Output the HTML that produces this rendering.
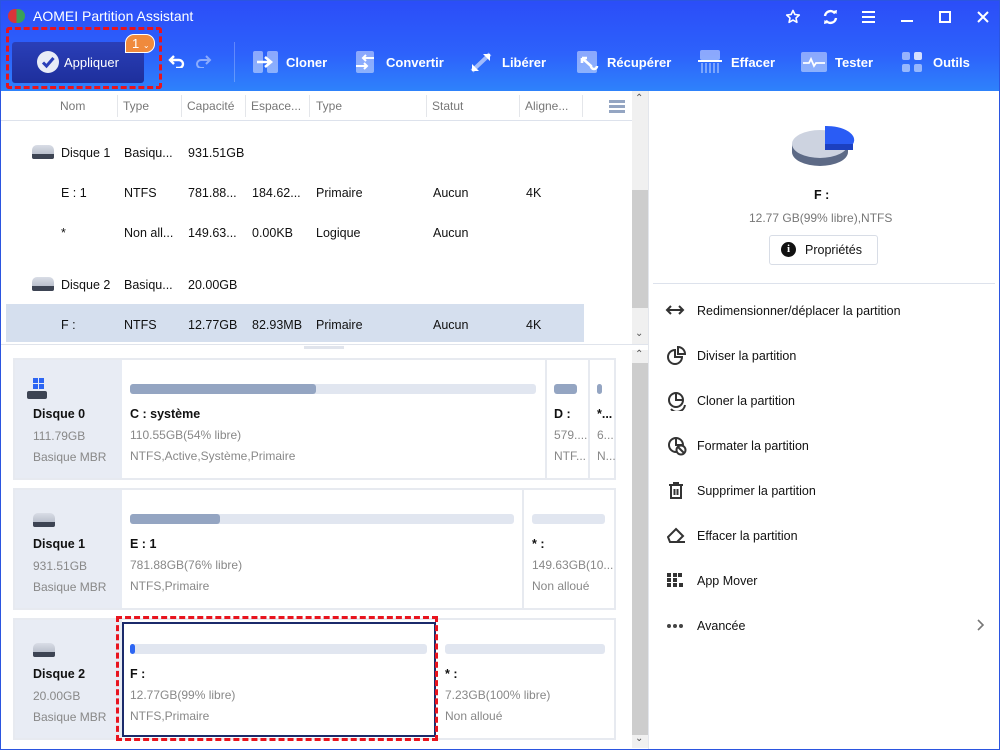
<!DOCTYPE html>
<html><head><meta charset="utf-8"><style>
*{margin:0;padding:0;box-sizing:border-box}
body{width:1000px;height:750px;overflow:hidden;font-family:"Liberation Sans",sans-serif;background:#fff;position:relative;font-size:13px;color:#111}
.a{position:absolute}
#hdr{left:0;top:0;width:1000px;height:91px;background:linear-gradient(#2b4df8,#2d62fb 60%,#2e82fb)}
.wt{color:#fff}
.tb{color:#fff;font-size:13px;font-weight:bold;top:55px}
.hd{top:99px;font-size:12px;color:#777}
.sep{top:95px;width:1px;height:22px;background:#e4e6ea}
.r{font-size:12.5px;color:#111}
.card{background:#fff;border:2px solid #e7eaf0}
.lab{background:#e8ecf4}
.bar{height:10px;border-radius:3px;background:#e1e6f0}
.fill{height:10px;border-radius:3px;background:#94a5c2}
.b{font-weight:bold;font-size:12.5px}
.g{color:#888;font-size:12px}
.mi{left:697px;font-size:12.5px;color:#111}
.disk{width:22px;height:14px;border-radius:5px 5px 2px 2px;background:linear-gradient(#d9dde6,#a9b0be)}
.disk:after{content:"";position:absolute;left:0;bottom:0;width:22px;height:5px;background:#3d4453;border-radius:0 0 2px 2px}
svg.i{position:absolute;fill:none;stroke:#333;stroke-width:2}
</style></head><body>
<div class="a" id="hdr"></div>
<div class="a" style="left:0;top:0;width:1000px;height:750px;border:1px solid #2b55e0;pointer-events:none;z-index:5"></div>
<div class="a" style="left:8px;top:9px;width:17px;height:14px;border-radius:7px;background:linear-gradient(90deg,#d8343a 50%,#3aa059 50%)"></div>
<div class="a wt" style="left:33px;top:8px;font-size:14px">AOMEI Partition Assistant</div>
<svg class="a" style="left:785px;top:9px" width="16" height="16" viewBox="0 0 16 16"><path d="M8 1.5l1.9 4 4.4.5-3.3 3 .9 4.3L8 11.1l-3.9 2.2.9-4.3-3.3-3 4.4-.5z" fill="none" stroke="#fff" stroke-width="1.6" stroke-linejoin="round"/></svg>
<svg class="a" style="left:822px;top:9px" width="17" height="16" viewBox="0 0 17 16"><path d="M3 7a5.5 5.5 0 0 1 10-2.5M14 9a5.5 5.5 0 0 1-10 2.5" fill="none" stroke="#fff" stroke-width="2.4"/><path d="M11 2l3.5 3L15 1zM6 14l-3.5-3L2 15z" fill="#fff"/></svg>
<div class="a" style="left:862px;top:11px;width:13px;height:2px;background:#fff;box-shadow:0 5px #fff,0 10px #fff"></div>
<div class="a" style="left:901px;top:20px;width:12px;height:2px;background:#fff"></div>
<div class="a" style="left:939px;top:11px;width:12px;height:12px;border:2px solid #fff"></div>
<svg class="a" style="left:977px;top:11px" width="12" height="12"><path d="M1 1l10 10M11 1L1 11" stroke="#fff" stroke-width="2"/></svg>
<!-- Appliquer -->
<div class="a" style="left:12px;top:42px;width:132px;height:41px;border-radius:3px;background:linear-gradient(#2a3fb8,#1e2f9c)"></div>
<div class="a" style="left:37px;top:51px;width:22px;height:22px;border-radius:50%;background:#e8ecf7"></div>
<svg class="a" style="left:37px;top:51px" width="22" height="22"><path d="M6 11.5l3.5 3.5 7-8" fill="none" stroke="#2a3fb8" stroke-width="3"/></svg>
<div class="a wt" style="left:64px;top:55px;font-size:13px">Appliquer</div>
<div class="a" style="left:125px;top:34px;width:30px;height:19px;border-radius:9px 9px 9px 0;background:#f08a3c;border:1px solid #fff;color:#fff;font-size:13px;line-height:17px;padding-left:6px">1 <span style="font-size:8px">⌄</span></div>
<div class="a" style="left:6px;top:27px;width:156px;height:62px;border:3px dashed #e8141e;border-radius:3px"></div>
<svg class="a" style="left:168px;top:54px" width="18" height="14"><path d="M6 2L2 6l4 4M2 6h9a4 4 0 0 1 0 8H8" fill="none" stroke="#fff" stroke-width="2.4"/></svg>
<svg class="a" style="left:194px;top:54px" width="18" height="14"><path d="M12 2l4 4-4 4M16 6H7a4 4 0 0 0 0 8h3" fill="none" stroke="rgba(255,255,255,.45)" stroke-width="2"/></svg>
<div class="a" style="left:234px;top:42px;width:1px;height:40px;background:rgba(255,255,255,.25)"></div>
<!-- toolbar -->
<svg class="a" style="left:253px;top:51px" width="25" height="22"><rect x="0" y="0" width="10" height="22" rx="2" fill="rgba(255,255,255,.45)"/><rect x="14" y="0" width="11" height="22" rx="2" fill="rgba(255,255,255,.45)"/><path d="M4 11h13M12 6l6 5-6 5" fill="none" stroke="#fff" stroke-width="2.6"/></svg><div class="a tb" style="left:286px">Cloner</div>
<svg class="a" style="left:355px;top:51px" width="20" height="22"><rect x="1" y="0" width="18" height="22" rx="2" fill="rgba(255,255,255,.45)"/><path d="M19 7H8M11 4L8 7l3 3M1 15h11M9 12l3 3-3 3" fill="none" stroke="#fff" stroke-width="2"/></svg><div class="a tb" style="left:386px">Convertir</div>
<svg class="a" style="left:470px;top:52px" width="22" height="21"><path d="M2 19L20 2" stroke="rgba(255,255,255,.55)" stroke-width="4"/><path d="M13 2h7v7M9 19H2v-7" fill="#fff"/></svg><div class="a tb" style="left:502px">Libérer</div>
<svg class="a" style="left:577px;top:51px" width="22" height="22"><rect x="0" y="0" width="20" height="22" rx="2" fill="rgba(255,255,255,.45)"/><path d="M5 7l9 8a3 3 0 0 0 6 0M5 7v5M5 7h5" fill="none" stroke="#fff" stroke-width="2.6"/></svg><div class="a tb" style="left:607px">Récupérer</div>
<svg class="a" style="left:698px;top:50px" width="24" height="23"><rect x="2" y="0" width="20" height="10" rx="2" fill="rgba(255,255,255,.45)"/><rect x="0" y="10" width="24" height="2" fill="#fff"/><path d="M4 13v10M8 13v10M12 13v10M16 13v10M20 13v10" stroke="rgba(255,255,255,.5)" stroke-width="1.5"/></svg><div class="a tb" style="left:731px">Effacer</div>
<svg class="a" style="left:801px;top:52px" width="26" height="20"><rect width="26" height="20" rx="2" fill="rgba(255,255,255,.45)"/><path d="M2 11h6l2-4 3 7 2-3h9" fill="none" stroke="#fff" stroke-width="1.8"/></svg><div class="a tb" style="left:835px">Tester</div>
<div class="a" style="left:902px;top:52px;width:8px;height:8px;border-radius:2px;background:rgba(255,255,255,.5);box-shadow:12px 0 rgba(255,255,255,.8),0 12px rgba(255,255,255,.5),12px 12px rgba(255,255,255,.5)"></div><div class="a tb" style="left:933px">Outils</div>
<!-- table header -->
<div class="a hd" style="left:60px">Nom</div>
<div class="a sep" style="left:117px"></div><div class="a hd" style="left:123px">Type</div>
<div class="a sep" style="left:181px"></div><div class="a hd" style="left:187px">Capacité</div>
<div class="a sep" style="left:245px"></div><div class="a hd" style="left:251px">Espace...</div>
<div class="a sep" style="left:309px"></div><div class="a hd" style="left:316px">Type</div>
<div class="a sep" style="left:426px"></div><div class="a hd" style="left:432px">Statut</div>
<div class="a sep" style="left:519px"></div><div class="a hd" style="left:525px">Aligne...</div>
<div class="a sep" style="left:582px"></div>
<div class="a" style="left:609px;top:100px;width:16px;height:3px;background:#94a5c2;box-shadow:0 5px #94a5c2,0 10px #94a5c2"></div>
<div class="a" style="left:0;top:120px;width:632px;height:1px;background:#dde2ec"></div>
<div class="a" style="left:632px;top:91px;width:16px;height:254px;background:#f0f0f0"></div>
<div class="a" style="left:632px;top:190px;width:16px;height:118px;background:#cdcdcd"></div>
<div class="a" style="left:635px;top:93px;font-size:10px;color:#555">⌃</div>
<div class="a" style="left:635px;top:328px;font-size:10px;color:#555">⌄</div>
<!-- rows -->
<div class="a" style="left:6px;top:304px;width:578px;height:38px;background:#d5dfee"></div>
<div class="a disk" style="left:32px;top:145px"></div><div class="a r" style="left:61px;top:146px">Disque 1</div><div class="a r" style="left:124px;top:146px">Basiqu...</div><div class="a r" style="left:188px;top:146px">931.51GB</div>
<div class="a r" style="left:61px;top:186px">E : 1</div><div class="a r" style="left:124px;top:186px">NTFS</div><div class="a r" style="left:188px;top:186px">781.88...</div><div class="a r" style="left:252px;top:186px">184.62...</div><div class="a r" style="left:316px;top:186px">Primaire</div><div class="a r" style="left:433px;top:186px">Aucun</div><div class="a r" style="left:526px;top:186px">4K</div>
<div class="a r" style="left:61px;top:226px">*</div><div class="a r" style="left:124px;top:226px">Non all...</div><div class="a r" style="left:188px;top:226px">149.63...</div><div class="a r" style="left:252px;top:226px">0.00KB</div><div class="a r" style="left:316px;top:226px">Logique</div><div class="a r" style="left:433px;top:226px">Aucun</div>
<div class="a disk" style="left:32px;top:277px"></div><div class="a r" style="left:61px;top:278px">Disque 2</div><div class="a r" style="left:124px;top:278px">Basiqu...</div><div class="a r" style="left:188px;top:278px">20.00GB</div>
<div class="a r" style="left:61px;top:318px">F :</div><div class="a r" style="left:124px;top:318px">NTFS</div><div class="a r" style="left:188px;top:318px">12.77GB</div><div class="a r" style="left:252px;top:318px">82.93MB</div><div class="a r" style="left:316px;top:318px">Primaire</div><div class="a r" style="left:433px;top:318px">Aucun</div><div class="a r" style="left:526px;top:318px">4K</div>
<div class="a" style="left:0;top:344px;width:648px;height:1px;background:#e0e4ec"></div>
<div class="a" style="left:304px;top:346px;width:40px;height:3px;background:#e0e4ec"></div>
<div class="a" style="left:632px;top:350px;width:16px;height:398px;background:#f0f0f0"></div>
<div class="a" style="left:632px;top:363px;width:16px;height:372px;background:#cdcdcd"></div>
<div class="a" style="left:635px;top:349px;font-size:10px;color:#555">⌃</div>
<div class="a" style="left:635px;top:733px;font-size:10px;color:#555">⌄</div>
<!-- card 0 -->
<div class="a card" style="left:13px;top:358px;width:603px;height:122px"></div>
<div class="a lab" style="left:15px;top:360px;width:107px;height:118px"></div>
<div class="a" style="left:33px;top:378px;width:5px;height:5px;background:#2d66f3;box-shadow:6px 0 #2d66f3,0 6px #2d66f3,6px 6px #2d66f3"></div>
<div class="a" style="left:27px;top:391px;width:20px;height:8px;background:#3d4453;border-radius:2px"></div>
<div class="a b" style="left:33px;top:407px">Disque 0</div><div class="a g" style="left:33px;top:429px">111.79GB</div><div class="a g" style="left:33px;top:450px">Basique MBR</div>
<div class="a bar" style="left:130px;top:384px;width:406px"><div class="fill" style="width:186px"></div></div>
<div class="a b" style="left:130px;top:407px">C : système</div><div class="a g" style="left:130px;top:428px">110.55GB(54% libre)</div><div class="a g" style="left:130px;top:449px">NTFS,Active,Système,Primaire</div>
<div class="a" style="left:545px;top:360px;width:2px;height:118px;background:#e7eaf0"></div>
<div class="a fill" style="left:554px;top:384px;width:23px"></div>
<div class="a b" style="left:554px;top:407px">D :</div><div class="a g" style="left:554px;top:428px">579....</div><div class="a g" style="left:554px;top:449px">NTF...</div>
<div class="a" style="left:588px;top:360px;width:2px;height:118px;background:#e7eaf0"></div>
<div class="a fill" style="left:597px;top:384px;width:5px"></div>
<div class="a b" style="left:597px;top:407px">*...</div><div class="a g" style="left:597px;top:428px">6...</div><div class="a g" style="left:597px;top:449px">N...</div>
<!-- card 1 -->
<div class="a card" style="left:13px;top:488px;width:603px;height:122px"></div>
<div class="a lab" style="left:15px;top:490px;width:107px;height:118px"></div>
<div class="a disk" style="left:33px;top:513px"></div>
<div class="a b" style="left:33px;top:537px">Disque 1</div><div class="a g" style="left:33px;top:559px">931.51GB</div><div class="a g" style="left:33px;top:580px">Basique MBR</div>
<div class="a bar" style="left:130px;top:514px;width:384px"><div class="fill" style="width:90px"></div></div>
<div class="a b" style="left:130px;top:537px">E : 1</div><div class="a g" style="left:130px;top:558px">781.88GB(76% libre)</div><div class="a g" style="left:130px;top:579px">NTFS,Primaire</div>
<div class="a" style="left:522px;top:490px;width:2px;height:118px;background:#e7eaf0"></div>
<div class="a bar" style="left:532px;top:514px;width:73px"></div>
<div class="a b" style="left:532px;top:537px">* :</div><div class="a g" style="left:532px;top:558px">149.63GB(10...</div><div class="a g" style="left:532px;top:579px">Non alloué</div>
<!-- card 2 -->
<div class="a card" style="left:13px;top:618px;width:603px;height:122px"></div>
<div class="a lab" style="left:15px;top:620px;width:107px;height:118px"></div>
<div class="a disk" style="left:33px;top:643px"></div>
<div class="a b" style="left:33px;top:667px">Disque 2</div><div class="a g" style="left:33px;top:689px">20.00GB</div><div class="a g" style="left:33px;top:710px">Basique MBR</div>
<div class="a" style="left:122px;top:622px;width:314px;height:115px;border:2px solid #1b2a6b"></div>
<div class="a bar" style="left:130px;top:644px;width:297px"><div style="width:5px;height:10px;border-radius:3px;background:#2d66f3"></div></div>
<div class="a b" style="left:130px;top:667px">F :</div><div class="a g" style="left:130px;top:688px">12.77GB(99% libre)</div><div class="a g" style="left:130px;top:709px">NTFS,Primaire</div>
<div class="a bar" style="left:445px;top:644px;width:160px"></div>
<div class="a b" style="left:445px;top:667px">* :</div><div class="a g" style="left:445px;top:688px">7.23GB(100% libre)</div><div class="a g" style="left:445px;top:709px">Non alloué</div>
<div class="a" style="left:116px;top:616px;width:322px;height:125px;border:3px dashed #e8141e"></div>
<!-- right panel -->
<div class="a" style="left:648px;top:91px;width:1px;height:659px;background:#e3e6ec"></div>
<svg class="a" style="left:790px;top:124px" width="66" height="50" viewBox="0 0 66 50">
<ellipse cx="30" cy="28" rx="28" ry="14" fill="#5d6a86"/><rect x="2" y="20" width="56" height="8" fill="#5d6a86"/>
<ellipse cx="30" cy="20" rx="28" ry="14" fill="#cdd3e0"/>
<path d="M35 2 L35 20 L63 20 A28 14 0 0 0 35 2Z" fill="#2a5cf5"/><rect x="35" y="20" width="28" height="6" fill="#1c40c0"/>
</svg>
<div class="a" style="left:814px;top:188px;font-weight:bold;font-size:12.5px">F :</div>
<div class="a" style="left:749px;top:211px;font-size:12px;color:#777">12.77 GB(99% libre),NTFS</div>
<div class="a" style="left:769px;top:235px;width:109px;height:30px;border:1px solid #d8dde6;border-radius:3px"></div>
<div class="a" style="left:781px;top:242px;width:15px;height:15px;border-radius:50%;background:#111;color:#fff;font-size:11px;font-weight:bold;text-align:center;line-height:15px;font-family:'Liberation Serif',serif">i</div>
<div class="a" style="left:805px;top:243px;font-size:12.5px">Propriétés</div>
<div class="a" style="left:653px;top:283px;width:342px;height:1px;background:#dde2ec"></div>
<svg class="i" style="left:665px;top:303px" width="20" height="14"><path d="M2 7h16M6 3L2 7l4 4M14 3l4 4-4 4"/></svg><div class="a mi" style="top:304px">Redimensionner/déplacer la partition</div>
<svg class="i" style="left:667px;top:346px" width="20" height="20"><path d="M8 4a7 7 0 1 0 7 7H8z"/><path d="M11 1v7h7a7 7 0 0 0-7-7z"/></svg><div class="a mi" style="top:349px">Diviser la partition</div>
<svg class="i" style="left:667px;top:391px" width="20" height="20"><circle cx="9" cy="9" r="7"/><path d="M9 2v7h7M4 18a8 8 0 0 0 14-4"/></svg><div class="a mi" style="top:394px">Cloner la partition</div>
<svg class="i" style="left:667px;top:436px" width="20" height="20"><circle cx="9" cy="9" r="7"/><path d="M9 2v7h7"/><circle cx="14" cy="14" r="4.5" fill="#fff"/><path d="M11 11l6 6"/></svg><div class="a mi" style="top:439px">Formater la partition</div>
<svg class="i" style="left:668px;top:482px" width="16" height="18"><path d="M1 3h14M5 1h6M3 4v12h10V4M6.5 7v6M9.5 7v6"/></svg><div class="a mi" style="top:484px">Supprimer la partition</div>
<svg class="i" style="left:667px;top:527px" width="20" height="18"><path d="M9 2l7 7-6 6H3L1 10z M3 15h15"/></svg><div class="a mi" style="top:529px">Effacer la partition</div>
<div class="a" style="left:667px;top:573px;width:4px;height:4px;background:#333;box-shadow:6px 0 #333,0 5px #333,6px 5px #333,0 10px #333,6px 10px #333,12px 10px #333,11px 0 #333"></div><div class="a mi" style="top:574px">App Mover</div>
<div class="a" style="left:667px;top:624px;width:4px;height:4px;border-radius:2px;background:#444;box-shadow:6px 0 #444,12px 0 #444"></div><div class="a mi" style="top:619px">Avancée</div>
<svg class="a" style="left:977px;top:619px" width="8" height="12"><path d="M1 1l5 5-5 5" fill="none" stroke="#777" stroke-width="1.6"/></svg>
</body></html>
